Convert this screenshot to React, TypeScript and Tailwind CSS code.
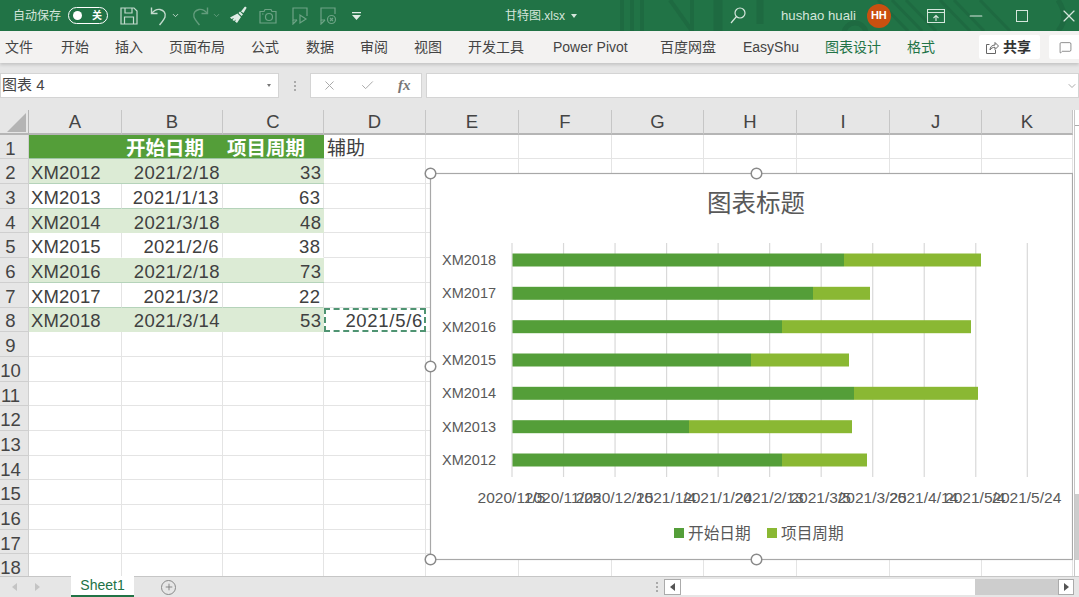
import { X, ChevronDown, Check, Plus, MessageSquare, Minus } from "lucide-react";

const latin = "font-['Liberation_Sans','Noto_Sans_CJK_SC',sans-serif]";

const tabs = [
  { label: "文件", w: "w-[56px]" },
  { label: "开始", w: "w-[54px]" },
  { label: "插入", w: "w-[54px]" },
  { label: "页面布局", w: "w-[82px]" },
  { label: "公式", w: "w-[55px]" },
  { label: "数据", w: "w-[54px]" },
  { label: "审阅", w: "w-[54px]" },
  { label: "视图", w: "w-[54px]" },
  { label: "开发工具", w: "w-[85px]" },
  { label: "Power Pivot", w: "w-[107px]" },
  { label: "百度网盘", w: "w-[83px]" },
  { label: "EasyShu", w: "w-[82px]" },
];

const rows = [
  ["XM2012", "2021/2/18", "33"],
  ["XM2013", "2021/1/13", "63"],
  ["XM2014", "2021/3/18", "48"],
  ["XM2015", "2021/2/6", "38"],
  ["XM2016", "2021/2/18", "73"],
  ["XM2017", "2021/3/2", "22"],
  ["XM2018", "2021/3/14", "53"],
];

const columns = ["A", "B", "C", "D", "E", "F", "G", "H", "I", "J", "K"];
const emptyCols = ["E", "F", "G", "H", "I", "J", "K"];

// index 0 = row 2
const banded = [true, false, true, false, true, false, true];
const strongLine = [true, true, false, false, true, true, false];

const bars = [
  { name: "XM2018", y: 260, a: 844, b: 981 },
  { name: "XM2017", y: 293.3, a: 813, b: 870 },
  { name: "XM2016", y: 326.7, a: 782, b: 971 },
  { name: "XM2015", y: 360, a: 751, b: 849 },
  { name: "XM2014", y: 393.3, a: 854, b: 978 },
  { name: "XM2013", y: 426.7, a: 689, b: 852 },
  { name: "XM2012", y: 460, a: 782, b: 867 },
];

const axis = [
  "2020/11/5", "2020/11/25", "2020/12/15", "2021/1/4", "2021/1/24", "2021/2/13",
  "2021/3/5", "2021/3/25", "2021/4/14", "2021/5/4", "2021/5/24",
];

function TitleIcons() {
  return (
    <div className="flex items-center text-[#d5e6dc]">
      <svg className="ml-[12px] shrink-0" width="18" height="18" viewBox="0 0 18 18" fill="none" stroke="#c3dacd" strokeWidth="1.2">
        <path d="M1 1h13l3 3v13H1z" />
        <path d="M5 1v5h7V1M4.500 17v-7h9v7" />
      </svg>
      <svg className="ml-[12px] shrink-0" width="18" height="20" viewBox="0 0 18 20" fill="none" stroke="#c3dacd" strokeWidth="1.4">
        <path d="M1.500 1.500v6h6" />
        <path d="M1.500 7.500C4 4.500 7 3 10 3.500c4 .8 6 4 5 7.500-.7 2.400-3 5-5.500 8" />
      </svg>
      <ChevronDown className="ml-[3px] shrink-0 text-[#c3dacd]" size={9} strokeWidth={2.5} />
      <svg className="ml-[11px] shrink-0 opacity-40" width="18" height="20" viewBox="0 0 18 20" fill="none" stroke="#c3dacd" strokeWidth="1.4">
        <path d="M16.500 1.500v6h-6" />
        <path d="M16.500 7.500C14 4.500 11 3 8 3.500c-4 .8-6 4-5 7.500.7 2.400 3 5 5.500 8" />
      </svg>
      <ChevronDown className="ml-[3px] shrink-0 text-[#c3dacd] opacity-40" size={9} strokeWidth={2.5} />
      <svg className="ml-[8px] shrink-0" width="19" height="19" viewBox="0 0 19 19" fill="#dfece5">
        <path d="M12 5.500 15.500 1c.8-.7 2-.1 2 1l-3 5z" />
        <path d="M11 5.500l3 3-1.500 1.500-3-3z" />
        <path d="M8.500 7.500l3.500 3.500-4 6-2-1.500 1-2-2 1.500-1.500-1 1.500-2-2.500 1-1.500-1.500z" />
      </svg>
      <svg className="ml-[11px] shrink-0 opacity-40" width="18" height="16" viewBox="0 0 18 16" fill="none" stroke="#dfece5" strokeWidth="1.2">
        <path d="M1 3.500h4l1-2h6l1 2h4v11.500H1z" />
        <circle cx="10" cy="9" r="3.500" />
        <path d="M3 6h1.500" />
      </svg>
      <svg className="ml-[15px] shrink-0 opacity-40" width="16" height="18" viewBox="0 0 16 18" fill="none" stroke="#dfece5" strokeWidth="1.2">
        <path d="M5 13H1V1h14v8" />
        <path d="M1 13v4l4-4" />
        <path d="M8 8v8l6-4z" />
      </svg>
      <svg className="ml-[12px] shrink-0 opacity-40" width="17" height="18" viewBox="0 0 17 18" fill="none" stroke="#dfece5" strokeWidth="1.2">
        <path d="M5 13H1V1h14v6" />
        <path d="M1 13v4l4-4" />
        <circle cx="11.500" cy="12.500" r="4" />
        <path d="M10 11l3 3m0-3-3 3" />
      </svg>
      <svg className="ml-[15px] shrink-0" width="9" height="8" viewBox="0 0 9 8" fill="#dfece5">
        <path d="M0 0h9v1.200H0zM0 3h9L4.500 8z" />
      </svg>
    </div>
  );
}

function TitleBar() {
  return (
    <div className={`relative flex h-[31px] shrink-0 items-center overflow-hidden whitespace-nowrap bg-[#217346] pl-[13px] text-[#d5e6dc] ${latin}`}>
      {/* faint pattern behind the title bar */}
      <svg className="absolute right-0 top-0" width="469" height="31" viewBox="0 0 469 31" fill="none" stroke="#1e6a41" strokeWidth="4">
        <path d="M12 0v31M22 0v31M32 0v31M60 0l22 31M82 0v31" />
        <path d="M108 0v31" strokeWidth="9" />
        <path d="M150 0v24" strokeWidth="7" />
        <circle cx="245" cy="34" r="11" strokeWidth="5" />
        <path d="M268 0l30 31M282 0l30 31M296 0l30 31M330 0l30 31M344 0l30 31M370 0l30 31" strokeWidth="3" />
        <path d="M448 0c8 12 8 22 0 31" strokeWidth="5" />
      </svg>
      <span className="relative shrink-0 text-[12px]">自动保存</span>
      <div className="relative ml-[7px] flex h-[17px] w-[40px] shrink-0 items-center justify-between rounded-full border border-white pl-[4px] pr-[5px]">
        <div className="h-[9px] w-[9px] rounded-full bg-white" />
        <span className="text-[10px] font-bold text-white">关</span>
      </div>
      <div className="relative shrink-0">
        <TitleIcons />
      </div>
      <span className="relative ml-[144px] shrink-0 text-[12px]">甘特图.xlsx</span>
      <div className="relative ml-[6px] h-0 w-0 shrink-0 border-x-[3.500px] border-t-[4px] border-x-transparent border-t-[#d5e6dc]" />
      <svg className="relative ml-[153px] shrink-0" width="16" height="17" viewBox="0 0 16 17" fill="none" stroke="#d5e6dc" strokeWidth="1.200">
        <circle cx="10" cy="6" r="5" />
        <path d="M6.500 9.500 1 16" />
      </svg>
      <span className="relative ml-[35px] shrink-0 text-[13.200px]">hushao huali</span>
      <div className="relative ml-[11px] flex h-[24px] w-[24px] shrink-0 items-center justify-center rounded-full bg-[#ca5010] text-[11px] font-bold text-white">
        HH
      </div>
      <svg className="relative ml-[36px] shrink-0" width="18" height="14" viewBox="0 0 18 14" fill="none" stroke="#d5e6dc" strokeWidth="1.100">
        <path d="M.500.500h17v13H.500zM.500 3.500h17" />
        <path d="M9 12V6.500M6.500 9 9 6.500 11.500 9" />
      </svg>
      <Minus className="relative ml-[21px] shrink-0" size={20} strokeWidth={1.300} />
      <div className="relative ml-[30px] h-[12px] w-[12px] shrink-0 border border-[#d5e6dc]" />
      <X className="relative ml-[31px] shrink-0" size={20} strokeWidth={1.400} />
    </div>
  );
}

function Ribbon() {
  return (
    <div className={`relative z-10 flex h-[32px] shrink-0 items-center whitespace-nowrap bg-[#f3f2f1] pl-[5px] text-[14px] text-[#444] shadow-[0_2px_3px_rgba(0,0,0,0.15)] ${latin}`}>
      {tabs.map((t) => (
        <div key={t.label} className={`${t.w} shrink-0`}>
          {t.label}
        </div>
      ))}
      <div className="w-[82px] shrink-0 text-[#217346]">图表设计</div>
      <div className="w-[28px] shrink-0 text-[#217346]">格式</div>
      <div className="ml-[44px] flex h-[24px] w-[61px] shrink-0 items-center gap-[4px] rounded-[2px] bg-white pl-[7px] font-bold text-[#333]">
        <svg width="13" height="13" viewBox="0 0 13 13" fill="none" stroke="#666" strokeWidth="1">
          <path d="M3.500 3.500H.500v9h9V9" />
          <path d="M4 9c0-3 2-5 5-5V1.500l3.500 3.500L9 8.500V6.300C7 6.300 5 7 4 9z" />
        </svg>
        共享
      </div>
      <div className="ml-[9px] flex h-[24px] w-[40px] shrink-0 items-center rounded-[2px] bg-white pl-[10px]">
        <MessageSquare size={13} strokeWidth={1.200} className="text-[#555]" />
      </div>
    </div>
  );
}

function FormulaBar() {
  return (
    <div className={`flex h-[36px] shrink-0 items-end bg-[#e6e6e6] pb-[1px] ${latin}`}>
      <div className="flex h-[25px] w-[279px] items-center justify-between border border-[#d4d4d4] bg-white pl-[1px] pr-[7px] text-[15px] text-[#444]">
        图表 4
        <div className="h-0 w-0 border-x-[2.500px] border-t-[3px] border-x-transparent border-t-[#777]" />
      </div>
      <div className="flex h-[25px] w-[31px] items-center justify-center">
        <div className="flex flex-col gap-[2px]">
          <div className="h-[2px] w-[2px] bg-[#aaa]" />
          <div className="h-[2px] w-[2px] bg-[#aaa]" />
          <div className="h-[2px] w-[2px] bg-[#aaa]" />
        </div>
      </div>
      <div className="flex h-[25px] w-[112px] items-center border border-[#d4d4d4] bg-white pl-[11px] text-[#aaa]">
        <X size={15} strokeWidth={1.600} />
        <Check className="ml-[23px]" size={15} strokeWidth={1.600} />
        <span className="ml-[23px] font-['Liberation_Serif',serif] text-[15px] font-bold italic text-[#777]">fx</span>
      </div>
      <div className="ml-[4px] flex h-[25px] flex-1 items-center justify-end border border-[#d4d4d4] bg-white">
        <ChevronDown size={12} className="text-[#aaa]" />
      </div>
    </div>
  );
}

function Sheet() {
  const headCell = "flex items-center justify-center border-r border-[#c6c6c6] bg-[#e6e6e6] pt-[2px] text-[18.500px] text-[#444]";
  const rowHead = "flex items-center justify-center whitespace-nowrap border-b border-r border-[#cfcfcf] bg-[#e6e6e6] pr-[7px] pt-[4px] text-[18.500px] text-[#444]";
  const empty = "border-b border-r border-[#e4e4e4] bg-white";
  const tableHead = "flex items-center justify-end whitespace-nowrap border-b border-[#9dc3a4] bg-[#549e39] pr-[19px] pt-[4px] text-[19.500px] font-bold text-white";
  const rowNums = Array.from({ length: 10 }, (_, i) => i + 9);

  return (
    <div className={`relative flex-1 overflow-hidden bg-white ${latin}`}>
      <div className="grid grid-cols-[29px_93px_101px_101px_102px_93px_93px_92px_93px_93px_92px_91px] auto-rows-[24.700px]">
        {/* header row */}
        <div className="flex items-end justify-end border-b-2 border-r border-[#b5b5b5] bg-[#e6e6e6] pb-[1px] pr-[2px]">
          <div className="h-0 w-0 border-b-[19px] border-l-[19px] border-b-[#b4b4b4] border-l-transparent" />
        </div>
        {columns.map((c) => (
          <div key={c} className={`${headCell} border-b-2 border-b-[#b5b5b5]`}>
            {c}
          </div>
        ))}

        {/* row 1 */}
        <div className={rowHead}>1</div>
        <div className="border-b border-[#9dc3a4] bg-[#549e39]" />
        <div className={tableHead}>开始日期</div>
        <div className={tableHead}>项目周期</div>
        <div className={`${empty} flex items-center pl-[3px] pt-[5px] text-[19px] text-[#404040]`}>辅助</div>
        {emptyCols.map((c) => (
          <div key={c} className={empty} />
        ))}

        {/* rows 2-8 */}
        {rows.map((r, i) => {
          const tone = banded[i] ? "bg-[#dcebd5]" : "bg-white border-r border-r-[#e4e4e4]";
          const line = strongLine[i] ? "border-b border-b-[#b5d3ba]" : "border-b border-b-transparent";
          const text = `flex items-center whitespace-nowrap pt-[4px] text-[18.500px] text-[#404040] ${tone} ${line}`;
          return [
            <div key={`h${i}`} className={rowHead}>{i + 2}</div>,
            <div key={`a${i}`} className={`${text} pl-[2px] tracking-[0.15px]`}>{r[0]}</div>,
            <div key={`b${i}`} className={`${text} justify-end pr-[3px] tracking-[0.45px]`}>{r[1]}</div>,
            <div key={`c${i}`} className={`${text} justify-end pr-[2.500px] tracking-[0.45px]`}>{r[2]}</div>,
            i === 6 ? (
              <div key="d8" className="flex items-center justify-end whitespace-nowrap border-2 border-dashed border-[#4f9472] pr-[1px] pt-[2px] text-[18.500px] tracking-[0.7px] text-[#404040]">2021/5/6</div>
            ) : (
              <div key={`d${i}`} className={empty} />
            ),
            ...emptyCols.map((c) => <div key={`${c}${i}`} className={empty} />),
          ];
        })}

        {/* rows 9-18 */}
        {rowNums.map((n) => [
          <div key={`h${n}`} className={rowHead}>{n}</div>,
          ...columns.map((c) => <div key={`${c}${n}`} className={empty} />),
        ])}
      </div>

      {/* floating chart */}
      <svg
        className="absolute left-[420px] top-[52px]"
        width="653"
        height="417"
        viewBox="420 162 653 417"
        fontFamily="'Liberation Sans','Noto Sans CJK SC',sans-serif"
      >
        <rect x="430.500" y="173.500" width="642" height="386" fill="#fff" stroke="#a8a8a8" strokeWidth="1.200" />
        <text x="756" y="212" fontSize="24.500" fill="#595959" textAnchor="middle">图表标题</text>
        {axis.map((label, i) => (
          <line key={i} x1={512 + i * 51.53} x2={512 + i * 51.53} y1="243" y2="477" stroke="#d9d9d9" strokeWidth="1.200" />
        ))}
        {bars.map((b) => (
          <g key={b.name}>
            <text x="442" y={b.y + 5} fontSize="14.500" fill="#595959">{b.name}</text>
            <rect x="512.500" y={b.y - 6.500} width={b.a - 512.500} height="13" fill="#549e39" />
            <rect x={b.a} y={b.y - 6.500} width={b.b - b.a} height="13" fill="#8ab833" />
          </g>
        ))}
        {axis.map((label, i) => (
          <text key={label} x={512 + i * 51.53 - 0.5} y="502.500" fontSize="15.500" fill="#595959" textAnchor="middle">{label}</text>
        ))}
        <rect x="674" y="528" width="10" height="10" fill="#549e39" />
        <text x="688" y="539" fontSize="15.700" fill="#595959">开始日期</text>
        <rect x="767" y="528" width="10" height="10" fill="#8ab833" />
        <text x="781" y="539" fontSize="15.700" fill="#595959">项目周期</text>
        {[[430.500, 173.500], [756.500, 173.500], [430.500, 366.500], [430.500, 559.500], [756.500, 559.500]].map(([x, y]) => (
          <circle key={`${x}-${y}`} cx={x} cy={y} r="5.300" fill="#fff" stroke="#8a8a8a" strokeWidth="1.500" />
        ))}
      </svg>
    </div>
  );
}

function BottomBar() {
  return (
    <div className={`flex h-[21px] shrink-0 items-stretch border-t border-[#c6c6c6] bg-[#e6e6e6] ${latin}`}>
      <div className="flex w-[71px] shrink-0 items-center pl-[12px]">
        <div className="h-0 w-0 border-y-[4px] border-r-[5px] border-y-transparent border-r-[#c4c4c4]" />
        <div className="ml-[18px] h-0 w-0 border-y-[4px] border-l-[5px] border-y-transparent border-l-[#c4c4c4]" />
      </div>
      <div className="-mt-px flex w-[63px] shrink-0 items-center justify-center whitespace-nowrap border-b-2 border-[#217346] bg-white text-[14px] text-[#217346]">
        Sheet1
      </div>
      <div className="ml-[27px] flex w-[14px] shrink-0 items-center">
        <div className="flex h-[15px] w-[15px] shrink-0 items-center justify-center rounded-full border border-[#888]">
          <Plus size={10} className="text-[#777]" />
        </div>
      </div>
      <div className="ml-[474px] flex w-[15px] shrink-0 items-center justify-center">
        <div className="flex flex-col gap-[2px]">
          <div className="h-[2px] w-[2px] bg-[#aaa]" />
          <div className="h-[2px] w-[2px] bg-[#aaa]" />
          <div className="h-[2px] w-[2px] bg-[#aaa]" />
        </div>
      </div>
      <div className="my-[2px] flex w-[410px] shrink-0 items-stretch bg-[#cdcdcd]">
        <div className="flex w-[17px] items-center justify-center border border-[#ababab] bg-white">
          <div className="h-0 w-0 border-y-[4px] border-r-[5px] border-y-transparent border-r-[#555]" />
        </div>
        <div className="w-[294px] bg-white" />
        <div className="flex-1" />
        <div className="flex w-[16px] items-center justify-center border border-[#ababab] bg-white">
          <div className="h-0 w-0 border-y-[4px] border-l-[5px] border-y-transparent border-l-[#555]" />
        </div>
      </div>
    </div>
  );
}

export default function App() {
  return (
    <div className="flex h-[597px] w-[1079px] flex-col overflow-hidden bg-[#e6e6e6]">
      <TitleBar />
      <Ribbon />
      <FormulaBar />
      <div className="h-[11px] shrink-0 bg-[#e6e6e6]" />
      <div className="flex min-h-0 flex-1">
        <Sheet />
        {/* vertical scrollbar */}
        <div className="flex w-[5px] shrink-0 flex-col border-l border-[#c6c6c6] bg-[#cdcdcd]">
          <div className="h-[16px] border-b border-[#ababab] bg-white" />
          <div className="h-[368px] bg-white" />
          <div className="flex-1" />
          <div className="h-[16px] bg-white" />
        </div>
      </div>
      <BottomBar />
    </div>
  );
}
